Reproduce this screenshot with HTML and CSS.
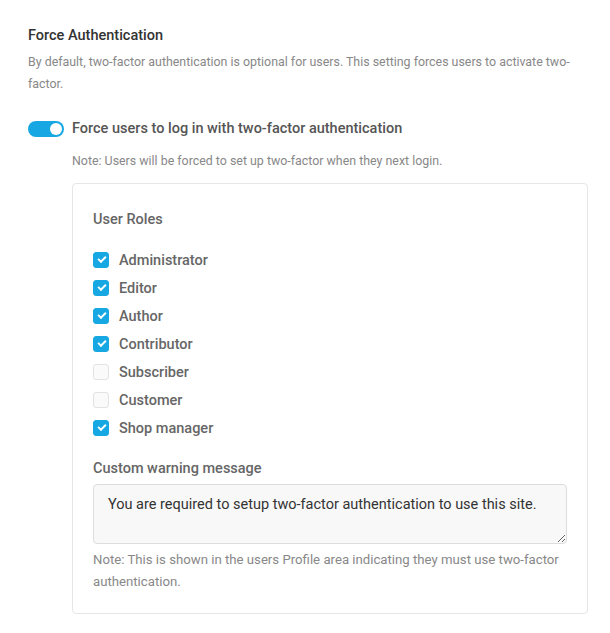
FILE: index.html
```html
<!DOCTYPE html>
<html>
    <head>
        <meta charset="UTF-8">
        <title>Force Authentication</title>
        <link rel="stylesheet" href="styles.css">
    </head>
    <body>
        <div class="settings">
            <h3 class="title">Force Authentication</h3>
            <p class="desc">By default, two-factor authentication is optional for users. This setting forces users to activate two-factor.</p>

            <label class="toggle-row">
                <span class="toggle"><span class="knob"></span></span>
                <span class="toggle-label">Force users to log in with two-factor authentication</span>
            </label>

            <div class="sub">
                <p class="note">Note: Users will be forced to set up two-factor when they next login.</p>

                <div class="box">
                    <h4 class="box-title">User Roles</h4>
                    <ul class="roles">
                        <li><span class="cb on"></span>Administrator</li>
                        <li><span class="cb on"></span>Editor</li>
                        <li><span class="cb on"></span>Author</li>
                        <li><span class="cb on"></span>Contributor</li>
                        <li><span class="cb"></span>Subscriber</li>
                        <li><span class="cb"></span>Customer</li>
                        <li><span class="cb on"></span>Shop manager</li>
                    </ul>

                    <h4 class="box-title msg-title">Custom warning message</h4>
                    <textarea class="msg">You are required to setup two-factor authentication to use this site.</textarea>
                    <p class="note note-msg">Note: This is shown in the users Profile area indicating they must use two-factor authentication.</p>
                </div>
            </div>
        </div>
    </body>
</html>
```

FILE: styles.css
```css
body{
    margin: 0;
    font-family: Roboto, "Liberation Sans", sans-serif;
    background: #fff;
}
/* 전체 영역 */
.settings{
    padding: 26px 28px 0 28px;
    width: 560px;
}
.title{
    margin: 0;
    font-size: 14.5px;
    font-weight: 500;
    color: #333;
    line-height: 20px;
}
.desc{
    margin: 5px 0 0;
    font-size: 12.4px;
    line-height: 22px;
    color: #888;
}
/* 토글 */
.toggle-row{
    display: flex;
    align-items: center;
    margin-top: 24px;
}
.toggle{
    width: 36px;
    height: 16px;
    border-radius: 8px;
    background: #17a8e3;
    position: relative;
    flex-shrink: 0;
}
.knob{
    position: absolute;
    right: 2px;
    top: 2px;
    width: 12px;
    height: 12px;
    border-radius: 50%;
    background: #fff;
}
.toggle-label{
    margin-left: 8px;
    font-size: 14.5px;
    font-weight: 500;
    color: #555;
    line-height: 20px;
}
/* 하위 영역 */
.sub{
    margin-left: 44px;
}
.note{
    margin: 0;
    font-size: 12.4px;
    line-height: 22px;
    color: #888;
}
.sub > .note{
    margin-top: 11px;
}
.box{
    margin-top: 11px;
    border: 1px solid #e6e6e6;
    border-radius: 4px;
    padding: 26px 20px 20px 20px;
}
.box-title{
    margin: 0;
    font-size: 14.5px;
    font-weight: 500;
    color: #666;
    line-height: 20px;
}
.roles{
    list-style: none;
    margin: 16px 0 0;
    padding: 0;
}
.roles li{
    display: flex;
    align-items: center;
    height: 28px;
    font-size: 14.5px;
    font-weight: 500;
    color: #666;
}
.cb{
    width: 16px;
    height: 16px;
    box-sizing: border-box;
    border: 1px solid #e3e3e3;
    border-radius: 3px;
    background: #fafafa;
    margin-right: 10px;
    position: relative;
}
.cb.on{
    background: #17a8e3;
    border-color: #17a8e3;
}
/* 체크표시 */
.cb.on::after{
    content: '';
    position: absolute;
    left: 4px;
    top: 3px;
    width: 6px;
    height: 3px;
    border-left: 2px solid #fff;
    border-bottom: 2px solid #fff;
    transform: rotate(-45deg);
}
.msg-title{
    margin-top: 17px;
}
.msg{
    display: block;
    box-sizing: border-box;
    width: 100%;
    height: 60px;
    margin-top: 5px;
    padding: 10px 14px 8px;
    background: #f8f8f8;
    border: 1px solid #ddd;
    border-radius: 4px;
    font-family: Roboto, "Liberation Sans", sans-serif;
    font-size: 14.5px;
    line-height: 20px;
    color: #333;
    resize: vertical;
}
.note-msg{
    margin-top: 5px;
    font-size: 13.2px;
}
```
